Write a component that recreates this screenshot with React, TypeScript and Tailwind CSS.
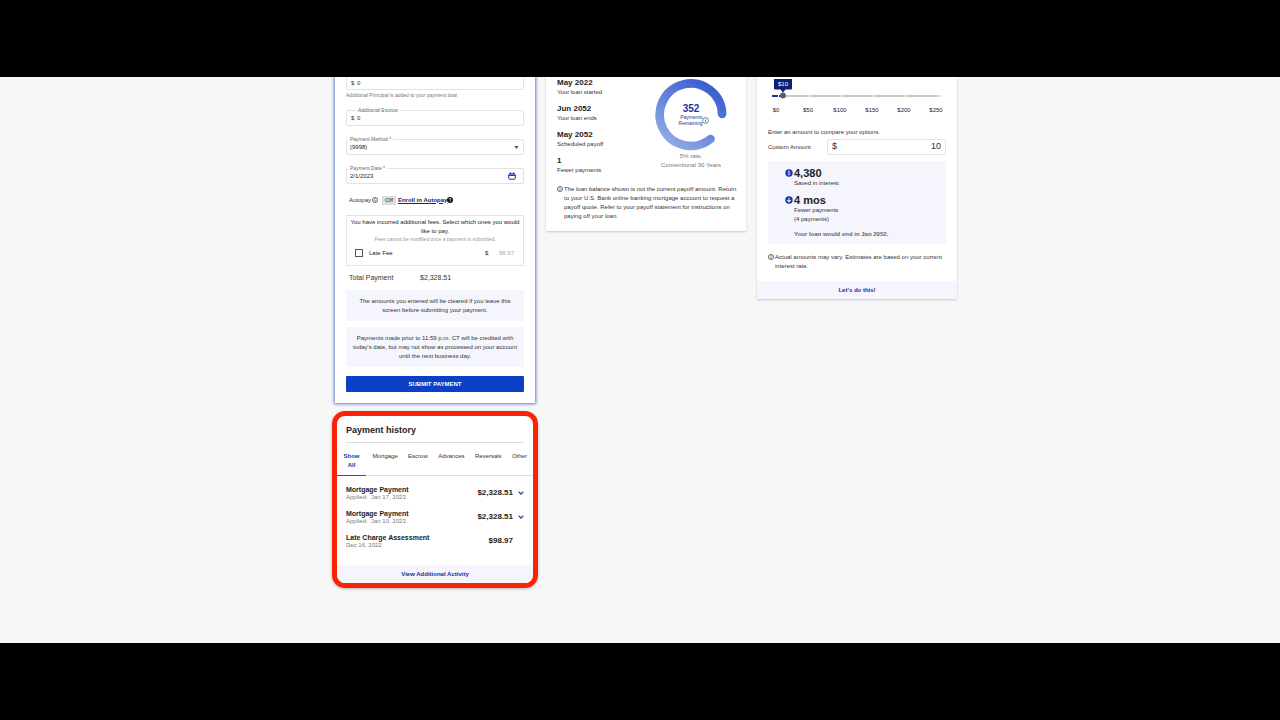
import { useState } from "react";
import type { ReactNode } from "react";

function InfoIcon({ className }: { className: string }) {
  return (
    <svg viewBox="0 0 12 12" className={className} fill="none" stroke="currentColor" aria-hidden="true">
      <circle cx="6" cy="6" r="5" strokeWidth="1.5" />
      <path d="M6 5.2v3.6M6 2.9v1.3" strokeWidth="1.6" />
    </svg>
  );
}

function ChevronDown() {
  return (
    <svg viewBox="0 0 6 4" className="h-1 w-1.5" fill="none" stroke="#1c35a6" strokeWidth="1.1" aria-hidden="true">
      <path d="M0.6 0.7 3 3.1 5.4 0.7" />
    </svg>
  );
}

function FloatingLabel({ id, className, children }: { id: string; className: string; children: ReactNode }) {
  return (
    <label
      htmlFor={id}
      className={`absolute -top-1 bg-white px-0.5 text-[5px] leading-[6px] text-[#666] ${className}`}
    >
      {children}
    </label>
  );
}

function Notice({ children }: { children: ReactNode }) {
  return (
    <p className="bg-[#f4f5fd] px-1 pt-[7px] pb-[6px] text-center text-[6px] leading-[9px] text-[#333]">
      {children}
    </p>
  );
}

function PaymentForm() {
  return (
    <form
      className="bg-white px-[11px] pb-[11px] shadow-[0_0_3px_1px_#6476c4]"
      onSubmit={(event) => event.preventDefault()}
    >
      <div className="flex h-[13px] items-center rounded-b-[2px] border-x border-b border-[#e2e2e2] px-1 text-[6px] text-[#333]">
        <span className="w-1.5">$</span>
        <input aria-label="Additional Principal" defaultValue="0" className="min-w-0 flex-1 outline-none" />
      </div>
      <p className="text-[5px] leading-[10px] text-[#777]">Additional Principal is added to your payment total</p>

      <div className="relative mt-2.5 flex h-4 items-center rounded-[2px] border border-[#e2e2e2] px-1 text-[6px] text-[#333]">
        <FloatingLabel id="escrow" className="left-[9px]">Additional Escrow</FloatingLabel>
        <span className="w-1.5">$</span>
        <input id="escrow" defaultValue="0" className="min-w-0 flex-1 outline-none" />
      </div>

      <div className="relative mt-[13px] flex h-4 items-center rounded-[2px] border border-[#e2e2e2] px-[3px] text-[6px] text-[#222]">
        <FloatingLabel id="method" className="left-px">Payment Method *</FloatingLabel>
        <select id="method" className="min-w-0 flex-1 appearance-none pt-px outline-none">
          <option>(9998)</option>
        </select>
        <svg viewBox="0 0 6 4" className="mr-px h-[3px] w-[5px]" fill="#555" aria-hidden="true">
          <path d="M0 0h6L3 4z" />
        </svg>
      </div>

      <div className="relative mt-[13px] flex h-4 items-center rounded-[2px] border border-[#e2e2e2] px-[3px] text-[6px] text-[#222]">
        <FloatingLabel id="date" className="left-px">Payment Date *</FloatingLabel>
        <input id="date" defaultValue="2/1/2023" className="min-w-0 flex-1 pt-px outline-none" />
        <button type="button" aria-label="Choose date" className="mr-1">
          <svg viewBox="0 0 16 16" className="h-2 w-2" fill="none" stroke="#1c3fae" strokeWidth="2" aria-hidden="true">
            <rect x="1.5" y="3.5" width="13" height="11" rx="2" />
            <path d="M1.5 6.5h13" strokeWidth="3" />
            <path d="M5 0.5v4M11 0.5v4" />
          </svg>
        </button>
      </div>

      <div className="mt-2.5 flex h-3 items-center pl-[3px] text-[6px] text-[#333]">
        <span>Autopay</span>
        <InfoIcon className="ml-px h-1.5 w-1.5" />
        <span className="ml-1 bg-[#dedee2] px-[3px] leading-[9px]">Off</span>
        <a href="#autopay" className="ml-0.5 font-bold text-[#14246e] underline">Enroll in Autopay</a>
        <svg viewBox="0 0 12 12" className="h-1.5 w-1.5" aria-hidden="true">
          <circle cx="6" cy="6" r="6" fill="#111" />
          <path d="M4 4.7a2 2 0 1 1 2.8 1.8Q6 6.9 6 7.7M6 8.8v1.3" fill="none" stroke="#fff" strokeWidth="1.4" />
        </svg>
      </div>

      <section className="mt-[9px] border border-[#e3e3e3] pt-0.5 pb-[6px] text-center text-[6px] text-[#222]">
        <p className="leading-[9px]">
          You have incurred additional fees. Select which ones you would
          <br />
          like to pay.
        </p>
        <p className="text-[5px] leading-[6px] text-[#999]">Fees cannot be modified once a payment is submitted.</p>
        <div className="mt-[5px] flex h-3 items-center pr-[9px] pl-2">
          <input
            id="late-fee"
            type="checkbox"
            className="mr-[6px] h-2 w-2 appearance-none border border-[#555] bg-white checked:bg-[#0a41c5]"
          />
          <label htmlFor="late-fee" className="flex-1 text-left">Late Fee</label>
          <span className="w-3.5 text-left">$</span>
          <span className="text-[#aaa]">98.97</span>
        </div>
      </section>

      <p className="mt-[7px] flex text-[7px] leading-[10px] text-[#333]">
        <span className="w-[74px] pl-[3px]">Total Payment</span>
        <span>$2,328.51</span>
      </p>

      <div className="mt-[7px] flex flex-col gap-[6px]">
        <Notice>
          The amounts you entered will be cleared if you leave this
          <br />
          screen before submitting your payment.
        </Notice>
        <Notice>
          Payments made prior to 11:59 p.m. CT will be credited with
          <br />
          today's date, but may not show as processed on your account
          <br />
          until the next business day.
        </Notice>
      </div>

      <button
        type="submit"
        className="mt-[9px] block h-4 w-full rounded-[1px] bg-[#0a41c5] text-[6px] leading-[16px] font-bold text-white"
      >
        SUBMIT PAYMENT
      </button>
    </form>
  );
}

const tabs = ["Show All", "Mortgage", "Escrow", "Advances", "Reversals", "Other"];

const payments = [
  { title: "Mortgage Payment", note: "Applied:  Jan 17, 2023", amount: "$2,328.51", expandable: true },
  { title: "Mortgage Payment", note: "Applied:  Jan 10, 2023", amount: "$2,328.51", expandable: true },
  { title: "Late Charge Assessment", note: "Dec 16, 2022", amount: "$98.97", expandable: false },
];

function PaymentHistory() {
  const [active, setActive] = useState("Show All");
  return (
    <section className="-mx-[3px] mt-2 overflow-hidden rounded-[13px] border-[5px] border-[#f92405] bg-white shadow-[0_1px_3px_#0004]">
      <h2 className="mx-[9px] border-b border-[#ddd] pt-2 pb-[6px] text-[9px] leading-[12px] font-bold text-[#222]">
        Payment history
      </h2>
      <div role="tablist" className="mt-2 flex justify-between border-b border-[#ddd] pr-[2px] text-[6px] leading-[9px] text-[#333]">
        {tabs.map((tab) => (
          <button
            key={tab}
            role="tab"
            aria-selected={tab === active}
            onClick={() => setActive(tab)}
            className={
              "-mb-px flex items-start justify-center border-b px-1 pt-px pb-[5px] first:w-[29px] " +
              (tab === active ? "border-[#2c4fc0] font-bold text-[#1736a8]" : "border-transparent")
            }
          >
            {tab}
          </button>
        ))}
      </div>
      <ul className="flex flex-col gap-2 px-[9px] pt-[9px] pb-4">
        {payments.map((payment) => (
          <li key={payment.title + payment.note} className="flex items-center">
            <div className="flex-1">
              <h3 className="text-[7px] leading-[9px] font-bold text-[#222]">{payment.title}</h3>
              <p className="text-[6px] leading-[7px] whitespace-pre text-[#777]">{payment.note}</p>
            </div>
            <span className="text-[8px] leading-[10px] font-bold text-[#222]">{payment.amount}</span>
            <div className="flex w-[11px] justify-end">
              {payment.expandable && (
                <button aria-label="Show details">
                  <ChevronDown />
                </button>
              )}
            </div>
          </li>
        ))}
      </ul>
      <a href="#activity" className="block bg-[#f4f5fd] text-center text-[6px] leading-[18px] font-bold text-[#14309c]">
        View Additional Activity
      </a>
    </section>
  );
}

const milestones = [
  ["May 2022", "Your loan started"],
  ["Jun 2052", "Your loan ends"],
  ["May 2052", "Scheduled payoff"],
  ["1", "Fewer payments"],
];

function LoanSummary() {
  return (
    <section className="bg-white px-[11px] pt-px pb-2.5 shadow-[0_1px_2px_#0003]">
      <div className="flex justify-between">
        <dl className="flex flex-col gap-[7px]">
          {milestones.map(([value, label]) => (
            <div key={label}>
              <dt className="text-[8px] leading-[10px] font-bold text-[#222]">{value}</dt>
              <dd className="text-[6px] leading-[9px] text-[#333]">{label}</dd>
            </div>
          ))}
        </dl>
        <div className="mr-2 flex flex-col items-center pt-px">
          <div className="grid place-items-center">
            <svg viewBox="0 0 72 72" className="col-start-1 row-start-1 h-[72px] w-[72px]" fill="none" aria-hidden="true">
              <defs>
                <linearGradient id="ring" x1="60" y1="12" x2="22" y2="66" gradientUnits="userSpaceOnUse">
                  <stop offset="0" stopColor="#3a60d0" />
                  <stop offset="1" stopColor="#8ca6e4" />
                </linearGradient>
              </defs>
              <path d="M67.1 35A31.2 31.2 0 1 0 55.5 60" stroke="url(#ring)" strokeWidth="8.6" strokeLinecap="round" />
            </svg>
            <div className="col-start-1 row-start-1 flex flex-col items-center text-[#1736a8]">
              <strong className="text-[10px] leading-[10px]">352</strong>
              <div className="flex items-center pl-1.5 text-[5px] leading-[6px]">
                <span className="text-right">
                  Payments
                  <br />
                  Remaining
                </span>
                <InfoIcon className="h-[7px] w-[7px] text-[#39808c]" />
              </div>
            </div>
          </div>
          <p className="mt-px text-center text-[6px] leading-[9px] text-[#777]">
            5% rate,
            <br />
            Conventional 30 Years
          </p>
        </div>
      </div>
      <div className="mt-2.5 flex gap-px text-[#333]">
        <InfoIcon className="mt-px h-1.5 w-1.5 shrink-0" />
        <p className="text-[6px] leading-[9px] whitespace-nowrap">
          The loan balance shown is not the current payoff amount. Return
          <br />
          to your U.S. Bank online banking mortgage account to request a
          <br />
          payoff quote. Refer to your payoff statement for instructions on
          <br />
          paying off your loan.
        </p>
      </div>
    </section>
  );
}

const ticks = ["$0", "$50", "$100", "$150", "$200", "$250"];

function Calculator() {
  return (
    <section className="bg-white shadow-[0_1px_2px_#0003]">
      <div className="px-[11px] pb-2.5">
        <div className="relative mr-1.5 ml-1 flex h-[26px] items-end pb-1.5">
          <div className="flex h-0.5 w-full gap-px">
            <span className="w-1.5 bg-[#1736a8]" />
            <span className="w-[30px] bg-[linear-gradient(90deg,#1736a8_5px,#c8c8c8_5px)]" />
            <span className="flex-1 bg-[#c8c8c8]" />
            <span className="flex-1 bg-[#c8c8c8]" />
            <span className="flex-1 bg-[#c8c8c8]" />
            <span className="flex-1 bg-[#c8c8c8]" />
            <span className="w-0.5 bg-[#c8c8c8]" />
          </div>
          <svg viewBox="0 0 18 22" className="absolute top-0.5 left-0.5 h-[22px] w-[18px]" aria-hidden="true">
            <path d="M0 0h18v9.500a1 1 0 0 1-1 1h-5.500L9 13.500l-2.500-3H1a1 1 0 0 1-1-1z" fill="#0c1f74" />
            <circle cx="9" cy="16.500" r="2.900" fill="#4c6078" />
          </svg>
          <output htmlFor="extra" className="absolute top-0.5 left-0.5 w-[18px] text-center text-[6px] leading-[10px] text-white">
            $10
          </output>
          <input
            id="extra"
            type="range"
            min="0"
            max="250"
            defaultValue="10"
            aria-label="Extra amount"
            className="absolute inset-x-0 bottom-0.5 h-2 opacity-0"
          />
        </div>
        <div className="mt-[3px] -ml-0.5 flex justify-between text-[6px] leading-[9px] text-[#222]">
          {ticks.map((tick) => (
            <span key={tick} className="w-5 text-center">{tick}</span>
          ))}
        </div>
        <p className="mt-[13px] text-[6px] leading-[9px] text-[#333]">Enter an amount to compare your options.</p>
        <div className="mt-0.5 flex items-center text-[#333]">
          <label htmlFor="custom" className="w-[59px] shrink-0 text-[6px]">Custom Amount</label>
          <div className="flex h-4 min-w-0 flex-1 items-center rounded-[2px] border border-[#e3e3e3] px-1 text-[9px]">
            <span>$</span>
            <input id="custom" defaultValue="10" className="min-w-0 flex-1 text-right outline-none" />
          </div>
        </div>
        <div className="mt-[6px] bg-[#f4f5fd] pt-[6px] pb-[5px] pl-[17px] text-[6px] leading-[9px] text-[#333]">
          <div className="flex">
            <svg viewBox="0 0 14 14" className="mt-[2px] mr-px h-2 w-2" fill="none" aria-hidden="true">
              <circle cx="7" cy="7" r="6.500" fill="#1736a8" />
              <path d="M9.200 4.600C7.600 3.500 5 3.900 5 5.400s4.200 1.300 4.200 3S6.200 10.600 4.700 9.200M7 2.800v8.400" stroke="#dce3ff" strokeWidth="1.100" />
            </svg>
            <p>
              <strong className="block text-[11px] leading-[12px] text-[#222]">4,380</strong>
              Saved in interest
            </p>
          </div>
          <div className="mt-[6px] flex">
            <svg viewBox="0 0 14 14" className="mt-[2px] mr-px h-2 w-2" fill="none" aria-hidden="true">
              <circle cx="7" cy="7" r="6.500" fill="#1736a8" />
              <path d="M7 3.500v6.500M4 7.300l3 3 3-3" stroke="#f4f5fd" strokeWidth="1.800" />
            </svg>
            <p>
              <strong className="block text-[11px] leading-[12px] text-[#222]">4 mos</strong>
              Fewer payments
              <br />
              (4 payments)
            </p>
          </div>
          <p className="mt-[6px] pl-[9px] font-bold text-[#666]">Your loan would end in Jan 2052.</p>
        </div>
        <div className="mt-[9px] flex gap-px text-[#333]">
          <InfoIcon className="mt-px h-1.5 w-1.5 shrink-0" />
          <p className="text-[6px] leading-[9px]">
            Actual amounts may vary. Estimates are based on your current
            <br />
            interest rate.
          </p>
        </div>
      </div>
      <a href="#compare" className="block bg-[#f4f5fd] text-center text-[6px] leading-[18px] font-bold text-[#14309c]">
        Let's do this!
      </a>
    </section>
  );
}

export default function App() {
  return (
    <div className="flex min-h-screen flex-col bg-black font-['Liberation_Sans',Arial,sans-serif]">
      <main className="mt-[77px] mb-[77px] flex-1 overflow-hidden bg-[#f7f7f7] pl-3">
        <div className="mx-auto grid w-full max-w-[622px] grid-cols-3 items-start gap-[11px]">
          <div>
            <PaymentForm />
            <PaymentHistory />
          </div>
          <LoanSummary />
          <Calculator />
        </div>
      </main>
    </div>
  );
}
